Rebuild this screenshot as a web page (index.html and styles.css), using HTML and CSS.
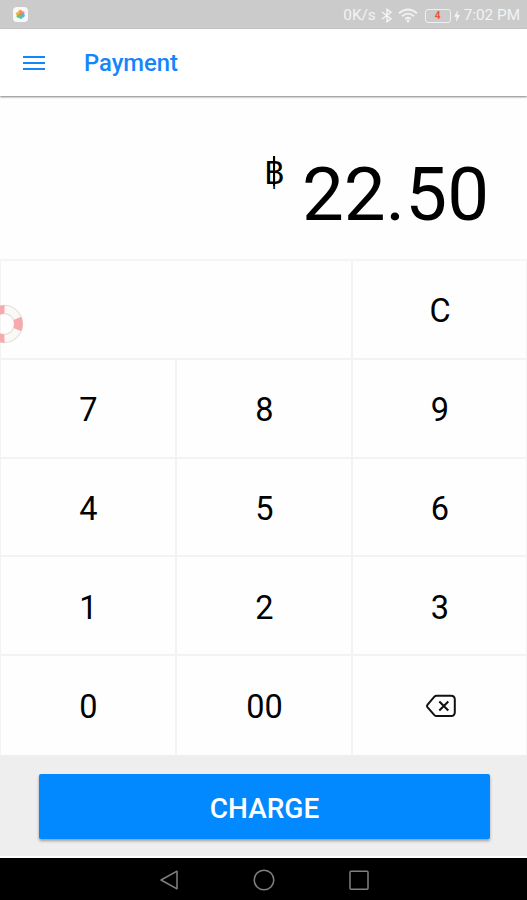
FILE: index.html
```html
<!DOCTYPE html>
<html lang="en">

<head>
    <meta charset="UTF-8">
    <meta name="viewport" content="width=device-width, initial-scale=1.0">
    <title>Payment</title>
    <link rel="stylesheet" href="styles.css">
</head>

<body>
    <div class="status-bar">
        <svg class="app-icon" width="15" height="15" viewBox="0 0 15 15">
            <rect width="15" height="15" rx="4" fill="#f8f8f8"></rect>
            <circle cx="7.3" cy="4.7" r="2" fill="#f0a04b"></circle>
            <circle cx="9.8" cy="6" r="1.8" fill="#ef7f92"></circle>
            <circle cx="4.8" cy="6.8" r="1.9" fill="#f2b53c"></circle>
            <circle cx="10" cy="8.6" r="1.8" fill="#5aaef0"></circle>
            <circle cx="5.4" cy="9.3" r="1.8" fill="#67c96b"></circle>
            <circle cx="7.9" cy="10.2" r="1.7" fill="#4fc3b8"></circle>
            <circle cx="7.5" cy="7.5" r="1.3" fill="#e5723c"></circle>
        </svg>
        <div class="status-info">
            <span class="speed">0K/s</span>
            <svg class="bluetooth" width="12" height="15" viewBox="0 0 12 15">
                <path d="M1 4 L10 10.7 L6 13.7 V1.3 L10 4.3 L1 11"></path>
            </svg>
            <svg class="wifi" width="20" height="15" viewBox="0 0 20 15">
                <path d="M1 5.2 Q10 -2.2 19 5.2 M4 8.2 Q10 3 16 8.2 M7 11 Q10 8.4 13 11"></path>
                <circle cx="10" cy="13" r="1.4"></circle>
            </svg>
            <span class="battery">4</span>
            <svg class="bolt" width="6" height="12" viewBox="0 0 6 12">
                <path d="M4 0 L0 6.8 H2.6 L2 12 L6 5 H3.4 Z"></path>
            </svg>
            <span class="time">7:02 PM</span>
        </div>
    </div>

    <header class="toolbar">
        <svg class="menu" width="22" height="17" viewBox="0 0 22 17">
            <path d="M0 3 H22 M0 9 H22 M0 15 H22"></path>
        </svg>
        <h1 class="title">Payment</h1>
    </header>

    <div class="amount">
        <span class="currency">฿</span>
        <span class="value">22.50</span>
    </div>

    <main class="keypad">
        <div class="key wide"></div>
        <div class="key">C</div>
        <div class="key">7</div>
        <div class="key">8</div>
        <div class="key">9</div>
        <div class="key">4</div>
        <div class="key">5</div>
        <div class="key">6</div>
        <div class="key">1</div>
        <div class="key">2</div>
        <div class="key">3</div>
        <div class="key last">0</div>
        <div class="key last">00</div>
        <div class="key last">
            <svg class="backspace" width="32" height="24" viewBox="0 0 32 24">
                <path d="M11.5 1.8 H26 Q29.8 1.8 29.8 5.6 V18.2 Q29.8 22 26 22 H11.5 Q10.3 22 9.4 21.1 L2.4 13.2 Q1.4 12 2.4 10.8 L9.4 2.7 Q10.3 1.8 11.5 1.8 Z"></path>
                <path d="M14.3 7.5 L23.3 16.5 M23.3 7.5 L14.3 16.5"></path>
            </svg>
        </div>
        <!-- floating shortcut, half hidden behind the screen edge -->
        <svg class="lifebuoy" width="24" height="40" viewBox="0 0 24 40">
            <circle class="ring-edge" cx="4" cy="20" r="14.5"></circle>
            <circle class="ring" cx="4" cy="20" r="14.5"></circle>
            <circle class="ring-band" cx="4" cy="20" r="14.5" pathLength="360"></circle>
        </svg>
    </main>

    <footer class="footer">
        <button class="charge">CHARGE</button>
    </footer>

    <nav class="nav-bar">
        <svg width="20" height="22" viewBox="0 0 20 22">
            <path d="M18 2.2 V19.8 L2 11 Z"></path>
        </svg>
        <svg width="22" height="22" viewBox="0 0 22 22">
            <circle cx="11" cy="11" r="9.8"></circle>
        </svg>
        <svg width="20" height="22" viewBox="0 0 20 22">
            <rect x="1" y="2.2" width="18" height="18" rx="1"></rect>
        </svg>
    </nav>
</body>

</html>
```

FILE: styles.css
```css
* {
    box-sizing: border-box;
}

body {
    margin: 0;
    height: 900px;
    display: flex;
    flex-direction: column;
    overflow: hidden;
    background: #fefefe;
    color: #000;
    font-family: Roboto, "Noto Sans", sans-serif;
}

svg {
    display: block;
    flex: none;
    fill: none;
}

/* status bar */
.status-bar {
    flex: none;
    height: 29px;
    padding: 0 7px 0 13px;
    display: flex;
    align-items: center;
    justify-content: space-between;
    background: #cbcbcb;
}

.status-info {
    display: flex;
    align-items: center;
    color: #f3f3f3;
    font-size: 15.3px;
    line-height: 29px;
    padding-top: 2px;
}

.bluetooth {
    margin-left: 5px;
    stroke: #f3f3f3;
    stroke-width: 1.5;
}

.wifi {
    margin-left: 5px;
    stroke: #f3f3f3;
    stroke-width: 1.8;
}

.wifi circle {
    fill: #f3f3f3;
    stroke: none;
}

.battery {
    width: 26px;
    height: 14px;
    margin-left: 7px;
    border: 1px solid #efefef;
    border-radius: 3px;
    color: #f0503c;
    font-size: 10px;
    font-weight: 700;
    line-height: 12px;
    text-align: center;
}

.bolt {
    margin: 0 4px 0 3px;
    fill: #f3f3f3;
}

/* toolbar */
.toolbar {
    position: relative;
    flex: none;
    height: 67px;
    padding-left: 23px;
    display: flex;
    align-items: center;
    background: #fff;
    box-shadow: 0 1px 2px rgba(0, 0, 0, 0.5);
}

.menu {
    stroke: #1486fb;
    stroke-width: 2;
}

.title {
    margin: 1px 0 0 39px;
    color: #1486fb;
    font-size: 23.8px;
    font-weight: 500;
}

/* amount */
.amount {
    flex: none;
    height: 163px;
    padding: 54px 38px 0 0;
    display: flex;
    justify-content: flex-end;
    align-items: flex-start;
}

.currency {
    position: relative;
    margin-right: 17px;
    font-family: "DejaVu Sans Condensed", "DejaVu Sans", sans-serif;
    font-stretch: condensed;
    font-size: 36px;
    line-height: 44px;
}

/* carries the stroke of the baht sign through the letter */
.currency::after {
    content: "";
    position: absolute;
    top: 6px;
    left: 9px;
    width: 2px;
    height: 30px;
    background: #000;
}

.value {
    margin-top: 1px;
    font-size: 74.5px;
    line-height: 88px;
}

/* keypad */
.keypad {
    position: relative;
    flex: none;
    height: 496px;
    display: grid;
    grid-template-columns: 176px 176px 1fr;
    grid-template-rows: repeat(5, 1fr);
    border-top: 2px solid #f5f5f5;
}

.key {
    display: flex;
    align-items: center;
    justify-content: center;
    padding: 4px 0 0 1px;
    border: 1px solid #f3f3f3;
    border-top-width: 0;
    border-bottom-width: 2px;
    font-size: 32.5px;
}

.wide {
    grid-column: span 2;
}

.last {
    padding-bottom: 2px;
    border-bottom-width: 0;
}

.backspace {
    margin: -2px 0 0 1px;
    stroke: #111;
    stroke-width: 2;
}

.lifebuoy {
    position: absolute;
    left: 0;
    top: 43px;
}

.ring-edge {
    stroke: #e3e3dc;
    stroke-width: 9.5;
}

.ring {
    stroke: #faf9f5;
    stroke-width: 7;
}

.ring-band {
    stroke: #f7a9ae;
    stroke-width: 8.5;
    stroke-dasharray: 23 65 47 90 47 65 23 0;
}

/* footer */
.footer {
    flex: none;
    height: 103px;
    padding: 19px 37px 0 39px;
    background: #eee;
    border-bottom: 2px solid #fdfdfd;
}

.charge {
    display: block;
    width: 100%;
    height: 65px;
    padding: 3px 0 0;
    border: 0;
    border-radius: 2px;
    background: #0389ff;
    box-shadow: 0 2px 3px rgba(0, 0, 0, 0.35);
    color: #fff;
    font-family: inherit;
    font-size: 28px;
    font-weight: 500;
}

/* android navigation */
.nav-bar {
    flex: 1;
    display: flex;
    align-items: center;
    justify-content: center;
    gap: 74px;
    padding-top: 1px;
    background: #000;
}

.nav-bar svg {
    stroke: #808080;
    stroke-width: 1.5;
    stroke-linejoin: round;
}
```
